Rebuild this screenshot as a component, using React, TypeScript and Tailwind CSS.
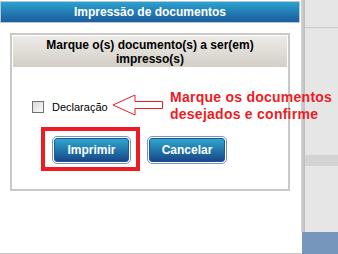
import React from 'react';

const font = { fontFamily: '"Liberation Sans", Arial, sans-serif' };

// Blue gradient button with the double outline
const BlueButton: React.FC<{ label: string; className?: string }> = ({ label, className }) => (
  <button
    className={`rounded-[5px] border border-[#7b93c6] bg-white p-[1px] ${className ?? ''}`}
  >
    <span className="flex h-full w-full items-center justify-center rounded-[3px] border border-[#1d5797] bg-gradient-to-b from-[#2fa7cd] via-[#2278ad] to-[#1a4789] text-[12px] font-bold text-white">
      {label}
    </span>
  </button>
);

const App: React.FC = () => {
  return (
    <div className="relative flex h-[254px] w-[338px] overflow-hidden bg-white" style={font}>
      {/* Dialog */}
      <div className="flex h-[254px] w-[301px] flex-col border-b border-[#c3c3c3] bg-white">
        <div className="mt-[1px] flex h-[22px] w-[300px] items-center justify-center border border-[#b7c7d7] bg-gradient-to-b from-[#2ba2cd] to-[#1d5c9e] text-[12px] font-bold text-white">
          Impressão de documentos
        </div>

        <div className="ml-[10px] mt-[10px] flex h-[158px] w-[280px] flex-col border-2 border-[#c9c9c9]">
          <div className="mx-[1px] mt-[1px] flex h-[31px] items-center justify-center bg-gradient-to-b from-[#eeebe7] to-[#d3cfc7] text-center text-[12px] font-bold leading-[14px] text-black">
            <span>
              Marque o(s) documento(s) a ser(em)
              <br />
              impresso(s)
            </span>
          </div>

          {/* Document list */}
          <label className="ml-[20px] mt-[34px] flex items-center gap-[8px]">
            <span className="h-[12px] w-[12px] border border-[#727272] bg-gradient-to-br from-[#d8d8d8] to-[#fbfbfb]" />
            <span className="text-[11px] leading-[12px] text-black">Declaração</span>
          </label>

          {/* Actions */}
          <div className="ml-[29px] mt-[14px] flex items-start">
            <div className="border-4 border-[#ed1c24] pb-[3px] pl-[7px] pr-[5px] pt-[5px]">
              <BlueButton label="Imprimir" className="h-[28px] w-[79px]" />
            </div>
            <BlueButton label="Cancelar" className="ml-[7px] mt-[9px] h-[28px] w-[80px]" />
          </div>
        </div>
      </div>

      {/* Page behind the dialog */}
      <div className="flex h-[254px] flex-1 flex-col">
        <div className="flex flex-1">
          <div className="w-[4px] bg-gradient-to-r from-[#d4d4d4] to-[#bcbcbc]" />
          <div className="flex flex-1 flex-col">
            <div className="h-[27px] bg-[#e6e6e6]" />
            <div className="h-[1px] bg-[#c9c9c9]" />
            <div className="h-[127px] bg-[#e6e6e6]" />
            <div className="h-[11px] bg-[#d3d3d3]" />
            <div className="flex-1 bg-[#e6e6e6]" />
          </div>
        </div>
        <div className="ml-[1px] h-[22px] bg-[#7697bb]" />
      </div>

      {/* Annotation: arrow */}
      <svg
        className="absolute left-[112px] top-[94px]"
        width="52"
        height="22"
        viewBox="0 0 52 22"
      >
        <path
          d="M1 11 L23 1 L23 7.5 L50.5 7.5 L50.5 14.5 L23 14.5 L23 21 Z"
          fill="white"
          stroke="#ed1c24"
          strokeWidth="1"
        />
      </svg>

      {/* Annotation: hint */}
      <div className="absolute left-[170px] top-[89px] text-[14px] font-bold leading-[17px] tracking-[0.25px] text-[#ed1c24]">
        Marque os documentos
        <br />
        desejados e confirme
      </div>
    </div>
  );
};

export default App;
